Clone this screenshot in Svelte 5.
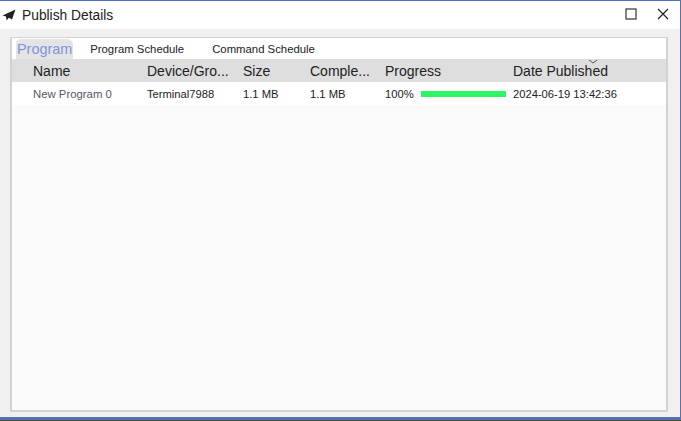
<script>
  const columns = [
    { label: "Name", width: 114 },
    { label: "Device/Gro...", width: 96 },
    { label: "Size", width: 67 },
    { label: "Comple...", width: 75 },
    { label: "Progress", width: 128 },
    { label: "Date Published", width: 130 }
  ];
  const tabs = ["Program Schedule", "Command Schedule"];
</script>

<div class="window">
  <header class="titlebar">
    <svg class="logo" width="14" height="12" viewBox="0 0 14 12">
      <path d="M13.5 0.5 L0.5 6.5 L4 7.6 L4.6 11.5 L6.8 8.8 L10 10.5 Z" fill="#222" />
    </svg>
    <span class="title">Publish Details</span>
    <div class="controls">
      <svg width="12" height="12" viewBox="0 0 12 12">
        <rect x="1" y="1" width="10" height="10" fill="none" stroke="#333" stroke-width="1.2" />
      </svg>
      <svg width="12" height="12" viewBox="0 0 12 12">
        <path d="M1 1 L11 11 M11 1 L1 11" stroke="#222" stroke-width="1.2" />
      </svg>
    </div>
  </header>

  <div class="body">
    <section class="panel">
      <nav class="tabs">
        <span class="tab active">Program</span>
        {#each tabs as tab}
          <span class="tab">{tab}</span>
        {/each}
      </nav>

      <div class="row head">
        {#each columns as col}
          <span class="cell" style="width: {col.width}px">{col.label}</span>
        {/each}
        <svg class="sort" width="10" height="5" viewBox="0 0 10 5">
          <path d="M1 1 L5 4 L9 1" fill="none" stroke="#555" stroke-width="1" />
        </svg>
      </div>

      <div class="row item">
        <span class="cell name" style="width: {columns[0].width}px">New Program 0</span>
        <span class="cell" style="width: {columns[1].width}px">Terminal7988</span>
        <span class="cell" style="width: {columns[2].width}px">1.1 MB</span>
        <span class="cell" style="width: {columns[3].width}px">1.1 MB</span>
        <span class="cell progress" style="width: {columns[4].width}px">
          100%
          <span class="bar"></span>
        </span>
        <span class="cell" style="width: {columns[5].width}px">2024-06-19 13:42:36</span>
      </div>
    </section>
  </div>
</div>

<style>
  :global(body) {
    margin: 0;
    background: #4a4a3c;
  }

  .window {
    box-sizing: border-box;
    width: 681px;
    height: 420px;
    border: 1px solid #5470b8;
    border-bottom-width: 3px;
    border-left: none;
    display: flex;
    flex-direction: column;
    font-family: "Liberation Sans", Arial, sans-serif;
    color: #222;
  }

  .titlebar {
    height: 28px;
    flex: none;
    background: #fff;
    display: flex;
    align-items: center;
    padding: 0 11px 0 2px;
  }

  .logo {
    margin-right: 6px;
  }

  .title {
    font-size: 13.8px;
  }

  .controls {
    margin-left: auto;
    display: flex;
    gap: 20px;
    margin-top: -3px;
  }

  .body {
    flex: 1;
    background: #f0f0f0;
    padding: 8px 12px 4px 10px;
    display: flex;
    border-bottom: 1px solid #f8f0d8;
  }

  .panel {
    flex: 1;
    box-sizing: border-box;
    background: #fafafa;
    border: 1px solid #d2d2d2;
    border-width: 1px 2px 2px 2px;
    display: flex;
    flex-direction: column;
  }

  .tabs {
    height: 21px;
    background: #fff;
    display: flex;
    align-items: flex-end;
    padding-left: 4px;
  }

  .tab {
    font-size: 11.35px;
    height: 20px;
    line-height: 21px;
    padding: 0 14px;
  }

  .tab.active {
    font-size: 14.4px;
    color: #7b96dc;
    background: #e4e4e4;
    padding: 0 1px;
    border-radius: 5px 6px 0 0;
    margin-right: 3px;
  }

  .row {
    display: flex;
    align-items: center;
    padding-left: 21px;
    position: relative;
  }

  .head {
    height: 23px;
    background: #dedede;
    font-size: 14px;
  }

  .item {
    height: 23px;
    background: #fff;
    font-size: 11.2px;
  }

  .cell {
    flex: none;
    white-space: nowrap;
  }

  .name {
    color: #5a5566;
    font-size: 11.35px;
  }

  .progress {
    display: flex;
    align-items: center;
    gap: 7px;
  }

  .bar {
    width: 85px;
    height: 6px;
    background: #2ef565;
  }

  .sort {
    position: absolute;
    left: 576px;
    top: 0;
  }
</style>
